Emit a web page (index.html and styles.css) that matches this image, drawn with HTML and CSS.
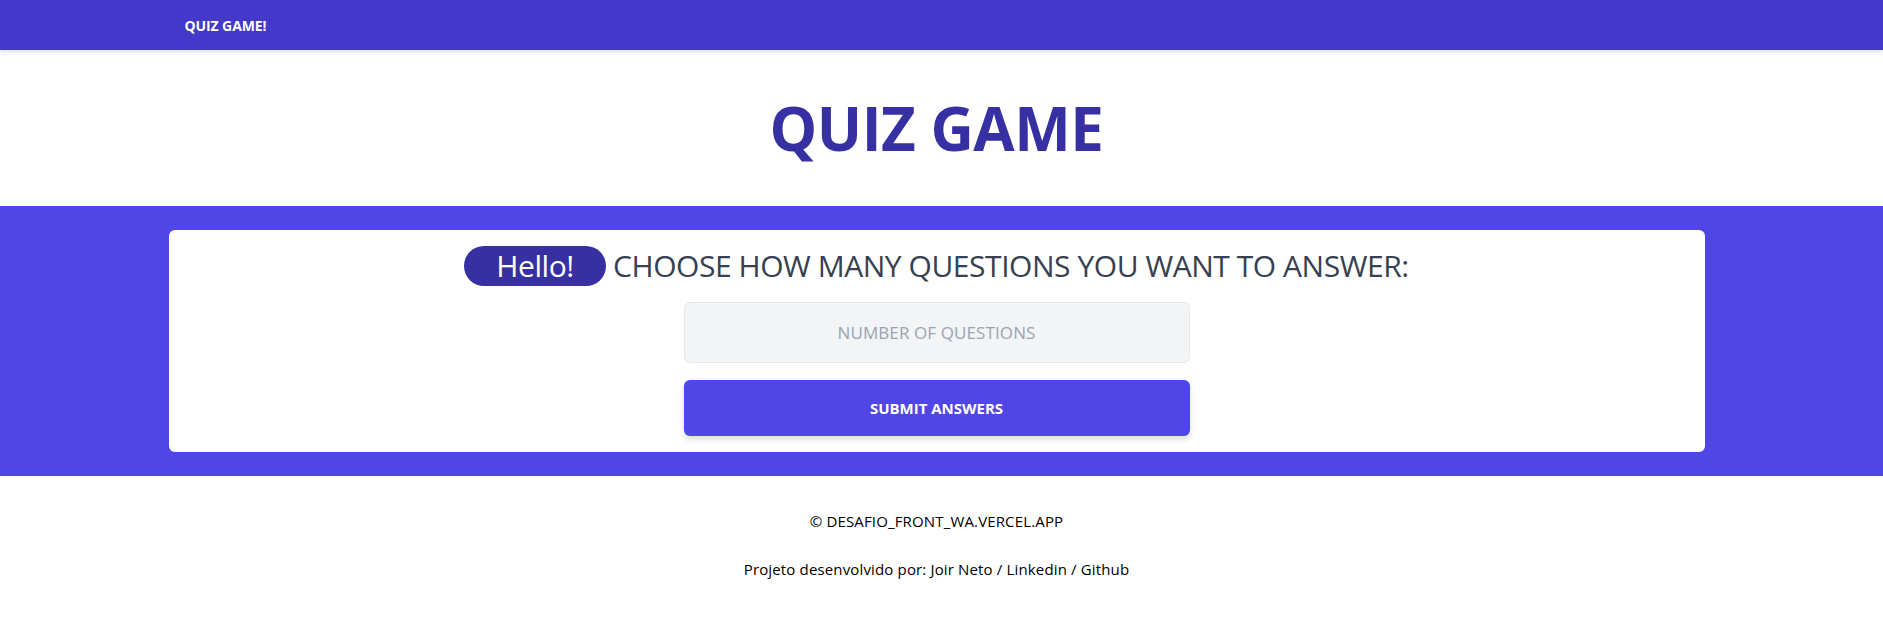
FILE: index.html
```html
<!DOCTYPE html>
<html lang="en">
<head>
<meta charset="utf-8">
<title>Quiz Game</title>
<link rel="stylesheet" href="styles.css">
</head>
<body>
  <nav class="navbar shell">
    <div class="container nav-inner">
      <span class="brand">QUIZ GAME!</span>
    </div>
  </nav>
  <header class="hero shell">
    <h1 class="title">QUIZ GAME</h1>
  </header>
  <section class="band shell">
    <div class="container card">
      <h2 class="prompt"><span class="badge">Hello!</span> CHOOSE HOW MANY QUESTIONS YOU WANT TO ANSWER:</h2>
      <form class="form">
        <input class="field" type="text" inputmode="numeric" placeholder="NUMBER OF QUESTIONS">
        <button class="submit" type="button">SUBMIT ANSWERS</button>
      </form>
    </div>
  </section>
  <footer class="footer shell">
    <p class="foot-line">© DESAFIO_FRONT_WA.VERCEL.APP</p>
    <p class="foot-line">Projeto desenvolvido por: Joir Neto / Linkedin / Github</p>
  </footer>
</body>
</html>
```
FILE: styles.css
```css
* { box-sizing: border-box; }
body {
  margin: 0;
  font-family: "Open Sans", "Noto Sans", sans-serif;
  background: #fff;
}
.shell { padding-right: 10px; }
.container {
  max-width: 1536px;
  margin: 0 auto;
}
.navbar {
  height: 50px;
  background: #4338ca;
  box-shadow: 0 2px 4px rgba(0,0,0,0.12);
  position: relative;
}
.nav-inner {
  height: 100%;
  display: flex;
  align-items: center;
  padding: 0 16px;
}
.brand {
  color: #fff;
  font-weight: 700;
  font-size: 14px;
  letter-spacing: -0.1px;
}
.hero {
  padding-top: 48px;
  padding-bottom: 48px;
}
.title {
  margin: 0;
  text-align: center;
  font-size: 60px;
  line-height: 60px;
  font-weight: 700;
  color: #3730a3;
  letter-spacing: -0.5px;
}
.band {
  background: #4f46e5;
  padding-top: 24px;
  padding-bottom: 24px;
}
.card {
  background: #fff;
  border-radius: 6px;
  padding: 16px;
  display: flex;
  flex-direction: column;
  align-items: center;
}
.prompt {
  margin: 0;
  font-size: 30px;
  line-height: 40px;
  font-weight: 400;
  color: #374151;
  text-align: center;
  letter-spacing: -0.45px;
}
.badge {
  display: inline-block;
  background: #3730a3;
  color: #fff;
  border-radius: 9999px;
  padding: 0 32px;
  height: 40px;
  line-height: 40px;
}
.form {
  margin-top: 16px;
  width: 506px;
  display: flex;
  flex-direction: column;
  gap: 17px;
}
.field {
  height: 61px;
  width: 100%;
  background: #f3f4f6;
  border: 1px solid #e5e7eb;
  border-radius: 6px;
  text-align: center;
  font-family: inherit;
  font-size: 17px;
  letter-spacing: 0.1px;
  color: #374151;
  outline: none;
  padding: 0 8px;
}
.field::placeholder { color: #9ca3af; }
.submit {
  height: 56px;
  width: 100%;
  background: #4f46e5;
  border: none;
  border-radius: 6px;
  color: #fff;
  font-family: inherit;
  font-weight: 700;
  font-size: 15px;
  box-shadow: 0 3px 6px rgba(0,0,0,0.15);
  letter-spacing: 0;
}
.footer {
  padding-top: 35px;
  display: flex;
  flex-direction: column;
  align-items: center;
  gap: 28px;
}
.foot-line {
  margin: 0;
  font-size: 15px;
  line-height: 20px;
  letter-spacing: 0.15px;
  color: #000;
}
```
